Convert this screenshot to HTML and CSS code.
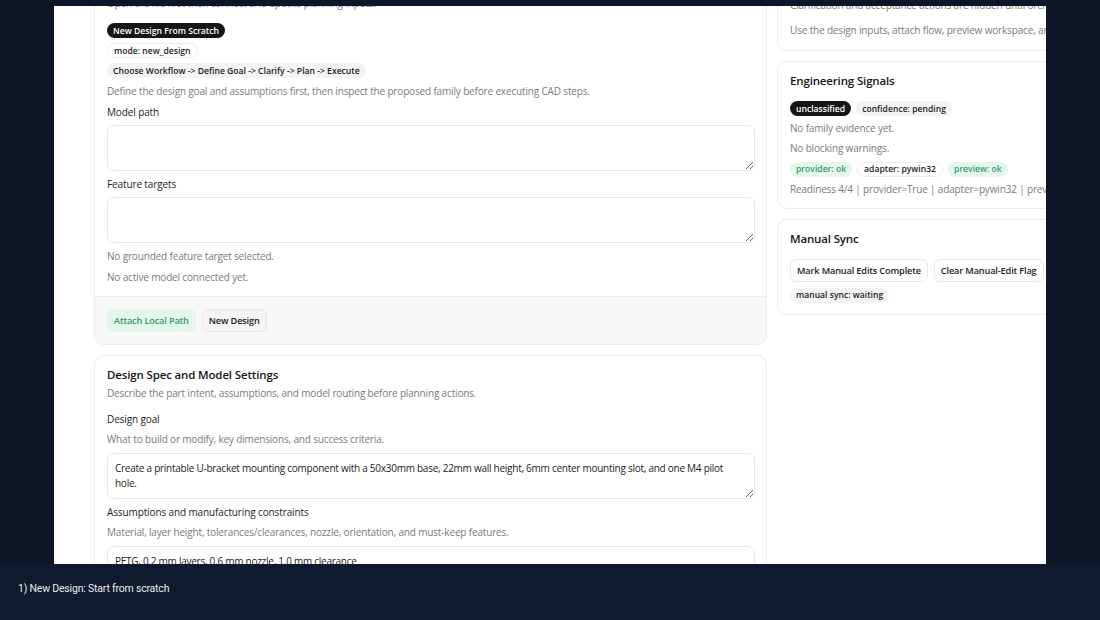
FILE: index.html
```
<!DOCTYPE html>
<html lang="en">
<head>
<meta charset="utf-8">
<title>New Design</title>
<link rel="stylesheet" href="styles.css">
</head>
<body>
<div class="stage">
  <div class="app">
    <div class="app-inner">
      <div class="main">
        <section class="card">
          <div class="card-body">
            <h2 class="card-title">Model Source</h2>
            <p class="muted lead">Open the file first then connect and update planning inputs.</p>
            <span class="pill pill-dark">New Design From Scratch</span>
            <span class="pill pill-outline">mode: new_design</span>
            <span class="pill pill-gray">Choose Workflow -&gt; Define Goal -&gt; Clarify -&gt; Plan -&gt; Execute</span>
            <p class="muted">Define the design goal and assumptions first, then inspect the proposed family before executing CAD steps.</p>
            <label class="label">Model path</label>
            <textarea class="field"></textarea>
            <label class="label">Feature targets</label>
            <textarea class="field"></textarea>
            <p class="muted">No grounded feature target selected.</p>
            <p class="muted">No active model connected yet.</p>
          </div>
          <div class="card-footer">
            <button class="btn btn-green">Attach Local Path</button>
            <button class="btn btn-light">New Design</button>
          </div>
        </section>

        <section class="card">
          <div class="card-body spec">
            <div class="head">
              <h2 class="card-title">Design Spec and Model Settings</h2>
              <p class="muted">Describe the part intent, assumptions, and model routing before planning actions.</p>
            </div>
            <div class="group">
              <label class="label">Design goal</label>
              <p class="muted hint">What to build or modify, key dimensions, and success criteria.</p>
              <textarea class="field filled">Create a printable U-bracket mounting component with a 50x30mm base, 22mm wall height, 6mm center mounting slot, and one M4 pilot hole.</textarea>
            </div>
            <div class="group">
              <label class="label">Assumptions and manufacturing constraints</label>
              <p class="muted hint">Material, layer height, tolerances/clearances, nozzle, orientation, and must-keep features.</p>
              <textarea class="field filled">PETG, 0.2 mm layers, 0.6 mm nozzle, 1.0 mm clearance</textarea>
            </div>
          </div>
        </section>
      </div>

      <aside class="side">
        <section class="card">
          <div class="card-body side-first">
            <h2 class="card-title">Orchestration</h2>
            <p class="muted">Clarification and acceptance actions are hidden until orchestration starts.</p>
            <p class="muted">Use the design inputs, attach flow, preview workspace, and signals below.</p>
          </div>
        </section>

        <section class="card">
          <div class="card-body side-body">
            <h2 class="card-title title-gap">Engineering Signals</h2>
            <div class="pill-row">
              <span class="pill pill-dark">unclassified</span>
              <span class="pill pill-gray">confidence: pending</span>
            </div>
            <p class="muted">No family evidence yet.</p>
            <p class="muted">No blocking warnings.</p>
            <div class="pill-row status-row">
              <span class="pill pill-green">provider: ok</span>
              <span class="pill pill-outline">adapter: pywin32</span>
              <span class="pill pill-green">preview: ok</span>
            </div>
            <p class="muted">Readiness 4/4 | provider=True | adapter=pywin32 | preview=ready</p>
          </div>
        </section>

        <section class="card">
          <div class="card-body side-body">
            <h2 class="card-title title-gap">Manual Sync</h2>
            <div class="btn-row">
              <button class="btn btn-white">Mark Manual Edits Complete</button>
              <button class="btn btn-white">Clear Manual-Edit Flag</button>
            </div>
            <span class="pill pill-gray sync-pill">manual sync: waiting</span>
          </div>
        </section>
      </aside>
    </div>
  </div>
</div>
<footer class="caption">1) New Design: Start from scratch</footer>
</body>
</html>
```

FILE: styles.css
```
* { box-sizing: border-box; }

html, body {
  margin: 0;
  padding: 0;
  background: #0e1526;
}

body {
  width: 1100px;
  height: 620px;
  overflow: hidden;
  font-family: "Open Sans", "Noto Sans", sans-serif;
}

.stage {
  height: 564px;
  padding: 6px 54px 0 54px;
  overflow: hidden;
}

.app {
  width: 992px;
  height: 558px;
  background: #ffffff;
  overflow: hidden;
}

.app-inner {
  display: flex;
  gap: 10px;
  padding-left: 40px;
  margin-top: -44px;
  width: 1400px;
}

.main {
  width: 673px;
  flex-shrink: 0;
  display: flex;
  flex-direction: column;
  gap: 10px;
}

.side {
  width: 300px;
  flex-shrink: 0;
  display: flex;
  flex-direction: column;
  gap: 10px;
}

.card {
  border: 1px solid #ececec;
  border-radius: 10px;
  background: #ffffff;
  overflow: hidden;
}

.card-body {
  padding: 11px 12px 11px 12px;
  display: flex;
  flex-direction: column;
  align-items: flex-start;
  gap: 5px;
}

.card-title {
  margin: 0;
  font-size: 11.5px;
  line-height: 16px;
  font-weight: 600;
  letter-spacing: -0.15px;
  color: #161616;
}

.title-gap { margin-bottom: 7px; }

.muted {
  margin: 0;
  font-size: 10px;
  line-height: 16px;
  letter-spacing: -0.16px;
  color: #7a7a7a;
  white-space: nowrap;
}

.lead { margin-bottom: 7px; }

.label {
  font-size: 10px;
  line-height: 16px;
  letter-spacing: -0.12px;
  color: #1c1c1c;
}

.pill {
  display: inline-flex;
  align-items: center;
  height: 15px;
  padding: 0 6px;
  border-radius: 999px;
  font-size: 8.6px;
  font-weight: 600;
  white-space: nowrap;
  color: #222;
}

.pill-dark { background: #161616; color: #ffffff; }
.pill-outline { background: #fff; border: 1px solid #ececec; }
.pill-gray { background: #f3f3f3; }
.pill-green { background: #e6f6ee; color: #2f9e6b; }

.pill-row {
  display: flex;
  gap: 5px;
}

.field {
  display: block;
  width: 648px;
  height: 46px;
  margin: 0;
  padding: 7px 7px;
  border: 1px solid #e8e8e8;
  border-radius: 7px;
  font-family: "Open Sans", "Noto Sans", sans-serif;
  font-size: 10px;
  line-height: 15px;
  letter-spacing: -0.26px;
  color: #1c1c1c;
  background: #fff;
  resize: vertical;
  outline: none;
}

.card-footer {
  border-top: 1px solid #ececec;
  background: #f7f7f7;
  padding: 12px;
  display: flex;
  gap: 6px;
}

.btn {
  height: 23px;
  padding: 0 6px;
  border-radius: 6px;
  font-family: "Open Sans", "Noto Sans", sans-serif;
  font-size: 9.2px;
  font-weight: 600;
  letter-spacing: -0.15px;
  white-space: nowrap;
  cursor: pointer;
}

.btn-green {
  background: #e4f5ec;
  color: #2f9e6b;
  border: 1px solid #e4f5ec;
}

.btn-light {
  background: #f4f4f4;
  border: 1px solid #e6e6e6;
  color: #1c1c1c;
}

.btn-white {
  background: #ffffff;
  border: 1px solid #e8e8e8;
  color: #1c1c1c;
}

.btn-row {
  display: flex;
  gap: 6px;
}

.spec { gap: 5px; }
.spec .head { display: flex; flex-direction: column; gap: 2px; margin-bottom: 5px; }
.group { display: flex; flex-direction: column; gap: 4px; }
.group .hint { margin-bottom: 2px; }

.side-first { gap: 9px; padding-bottom: 12px; }
.side-first .card-title { margin-bottom: -2px; }

.side-body { gap: 4px; }
.side-body .title-gap { margin-bottom: 8px; }
.status-row { margin-top: 1.5px; }
.sync-pill { margin-top: 2px; }

.caption {
  height: 56px;
  background: #101a2e;
  color: #e8ebf0;
  font-family: Roboto, "Liberation Sans", sans-serif;
  font-size: 10.5px;
  line-height: 16px;
  padding: 17px 18px;
  letter-spacing: -0.2px;
}
```
